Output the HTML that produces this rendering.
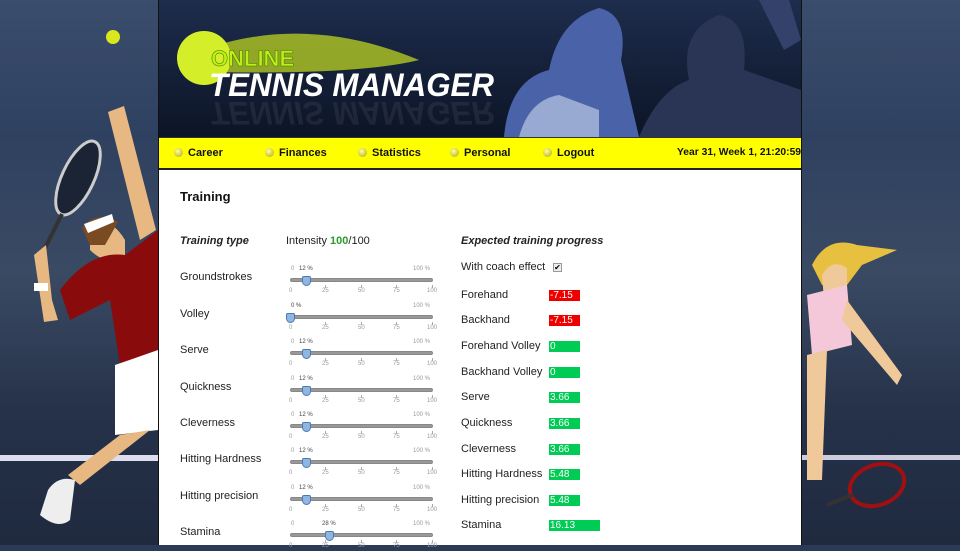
<!DOCTYPE html>
<html><head><meta charset="utf-8"><style>
*{margin:0;padding:0;box-sizing:border-box}
body{width:960px;height:545px;overflow:hidden;position:relative;font-family:"Liberation Sans",Arial,sans-serif;background:#2b3a55}
.side{position:absolute;top:0;height:545px;width:158px;background:linear-gradient(180deg,#3b4d6c 0%,#2f4160 25%,#3a4a63 50%,#26324a 75%,#1f2a3f 100%)}
#main{position:absolute;left:158px;top:0;width:644px;height:545px;background:#fff;border-left:1px solid #111;border-right:1px solid #111}
#hdr{position:absolute;left:0;top:0;width:642px;height:137px;background:linear-gradient(180deg,#1e2d4d,#0c1426)}
#nav{position:absolute;left:0;top:137px;width:642px;height:33px;background:#ffff00;border-top:1px solid #333;border-bottom:2px solid #222;font-size:11px;font-weight:bold;color:#111}
#nav span{position:absolute;top:9px;white-space:nowrap}
#nav i{display:inline-block;width:9px;height:9px;border-radius:50%;background:radial-gradient(circle at 40% 35%,#ffffa0,#b0a800);margin-right:5px;vertical-align:-1px}
.a{position:absolute;font-size:11px;color:#222;white-space:nowrap}
.s{position:absolute;font-size:6px;color:#999;white-space:nowrap;line-height:7px}
.tr{position:absolute;left:290px;width:143px;height:4px;background:#999;border-radius:2px;border:1px solid #888}
.th{position:absolute;width:9px;height:10px;background:#8fb6e0;border:1px solid #4a7ab0;border-radius:2px 2px 5px 5px}
.tk{position:absolute;width:1px;height:3px;background:#aaa}
.v{position:absolute;left:549px;height:11px;font-size:10px;color:#fff;padding-left:1px;line-height:11px}
.r{background:#ee0000}.g{background:#00cc55}
.row{position:absolute;left:0;width:960px;height:30px}
</style></head><body>
<div class="side" style="left:0"></div>
<div class="side" style="left:802px"></div>
<svg style="position:absolute;left:0;top:0" width="160" height="545">
<rect x="0" y="455" width="158" height="6" fill="#dde"/>
<circle cx="113" cy="37" r="7" fill="#d8e81c"/>
<ellipse cx="78" cy="178" rx="16" ry="40" transform="rotate(25 78 178)" fill="#1b2435" stroke="#ccc" stroke-width="3"/>
<line x1="62" y1="214" x2="44" y2="250" stroke="#333" stroke-width="4"/>
<path d="M108 112 L124 106 L156 230 L140 240Z" fill="#e8b883"/>
<path d="M90 225 Q110 215 125 240 L125 260 Q105 265 90 250Z" fill="#e8b883"/>
<path d="M82 228 Q95 210 118 222 L105 245 L90 245Z" fill="#7a4a22"/>
<path d="M84 224 L112 214 L114 222 L88 233Z" fill="#fff"/>
<path d="M60 290 Q90 250 125 255 L158 230 L158 350 L120 365 L110 300 L70 320Z" fill="#8a0b0b"/>
<path d="M34 255 L46 245 L52 300 L58 320 L44 322Z" fill="#e8b883"/>
<rect x="34" y="283" width="14" height="8" fill="#fff"/>
<path d="M115 365 L158 350 L158 430 L115 435Z" fill="#fff"/>
<path d="M120 435 L150 430 L80 485 L68 475Z" fill="#e8b883"/>
<path d="M48 490 Q58 475 75 480 L70 520 Q58 530 40 515Z" fill="#eee"/>
</svg>
<svg style="position:absolute;left:802px;top:0" width="158" height="545">
<rect x="0" y="455" width="158" height="5" fill="#ccd"/>
<path d="M10 265 Q25 235 55 245 L95 250 L60 265 L45 285 L20 285Z" fill="#e8c040"/>
<path d="M20 275 Q30 258 45 268 L45 300 L22 300Z" fill="#f0c99a"/>
<path d="M5 295 L45 285 L50 345 L10 355Z" fill="#f4c8d8"/>
<path d="M45 300 L100 375 L95 385 L40 320Z" fill="#f0c99a"/>
<path d="M5 355 L25 350 L20 480 L5 480Z" fill="#f0c99a"/>
<ellipse cx="75" cy="485" rx="28" ry="20" transform="rotate(-20 75 485)" fill="none" stroke="#a01010" stroke-width="4"/>
<line x1="50" y1="495" x2="25" y2="505" stroke="#333" stroke-width="4"/>
</svg>
<div id="main">
<div id="hdr">
<svg width="642" height="137">
<path d="M30 55 Q140 10 260 60 Q200 75 50 72Z" fill="#c8e020" opacity=".7"/>
<circle cx="45" cy="58" r="27" fill="#d4ee2a"/>
<text x="52" y="66" font-family="Liberation Sans" font-weight="bold" font-size="22" fill="#b8f018" stroke="#4a7000" stroke-width=".5">ONLINE</text>
<text x="50" y="96" font-family="Liberation Sans" font-weight="bold" font-style="italic" font-size="32" fill="#fff" textLength="285" lengthAdjust="spacingAndGlyphs">TENNIS MANAGER</text>
<g transform="translate(0,198) scale(1,-1)"><text x="50" y="96" font-family="Liberation Sans" font-weight="bold" font-style="italic" font-size="32" fill="#556" opacity=".25" textLength="285" lengthAdjust="spacingAndGlyphs">TENNIS MANAGER</text></g>
<path d="M345 137 Q350 80 390 70 Q400 20 440 8 Q470 15 462 60 L480 137Z" fill="#4a62a8"/>
<path d="M360 137 Q370 100 400 95 L440 110 L440 137Z" fill="#cdd8ef" opacity=".6"/>
<path d="M480 137 Q500 90 530 80 Q520 30 560 15 Q590 20 585 70 L642 90 L642 137Z" fill="#2a3556"/>
<path d="M600 0 L630 0 L642 40 L625 50Z" fill="#34416b"/>
</svg>
</div>
<div id="nav">
<span style="left:15px"><i></i>Career</span>
<span style="left:106px"><i></i>Finances</span>
<span style="left:199px"><i></i>Statistics</span>
<span style="left:291px"><i></i>Personal</span>
<span style="left:384px"><i></i>Logout</span>
<span style="left:518px;font-size:10.3px">Year 31, Week 1, 21:20:59</span>
</div>
</div>
<div class="a" style="left:180px;top:189px;font-size:13px;font-weight:bold;color:#111">Training</div>
<div class="a" style="left:180px;top:235px;font-weight:bold;font-style:italic">Training type</div>
<div class="a" style="left:286px;top:235px">Intensity <b style="color:#2a9a2a">100</b>/100</div>
<div class="a" style="left:461px;top:235px;font-weight:bold;font-style:italic">Expected training progress</div>
<div class="a" style="left:461px;top:261px">With coach effect</div>
<div style="position:absolute;left:553px;top:263px;width:9px;height:9px;border:1px solid #999;background:#eee;font-size:8px;line-height:8px;text-align:center">✔</div>

<div class="a" style="left:180px;top:271px">Groundstrokes</div>
<div class="a" style="left:180px;top:308px">Volley</div>
<div class="a" style="left:180px;top:344px">Serve</div>
<div class="a" style="left:180px;top:381px">Quickness</div>
<div class="a" style="left:180px;top:417px">Cleverness</div>
<div class="a" style="left:180px;top:453px">Hitting Hardness</div>
<div class="a" style="left:180px;top:490px">Hitting precision</div>
<div class="a" style="left:180px;top:526px">Stamina</div>

<div class="row" style="top:266px">
<div class="s" style="left:291px;top:0">0</div><div class="s" style="left:299px;top:0;color:#444">12 %</div><div class="s" style="left:413px;top:0">100 %</div>
<div class="tr" style="top:12px"></div><div class="th" style="left:302px;top:10px"></div>
<div class="tk" style="left:325px;top:19px"></div><div class="tk" style="left:361px;top:19px"></div><div class="tk" style="left:396px;top:19px"></div><div class="tk" style="left:432px;top:19px"></div>
<div class="s" style="left:289px;top:22px">0</div><div class="s" style="left:322px;top:22px">25</div><div class="s" style="left:358px;top:22px">50</div><div class="s" style="left:393px;top:22px">75</div><div class="s" style="left:427px;top:22px">100</div>
</div>
<div class="row" style="top:303px">
<div class="s" style="left:291px;top:0;color:#444">0 %</div><div class="s" style="left:413px;top:0">100 %</div>
<div class="tr" style="top:12px"></div><div class="th" style="left:286px;top:10px"></div>
<div class="tk" style="left:325px;top:19px"></div><div class="tk" style="left:361px;top:19px"></div><div class="tk" style="left:396px;top:19px"></div><div class="tk" style="left:432px;top:19px"></div>
<div class="s" style="left:289px;top:22px">0</div><div class="s" style="left:322px;top:22px">25</div><div class="s" style="left:358px;top:22px">50</div><div class="s" style="left:393px;top:22px">75</div><div class="s" style="left:427px;top:22px">100</div>
</div>
<div class="row" style="top:339px">
<div class="s" style="left:291px;top:0">0</div><div class="s" style="left:299px;top:0;color:#444">12 %</div><div class="s" style="left:413px;top:0">100 %</div>
<div class="tr" style="top:12px"></div><div class="th" style="left:302px;top:10px"></div>
<div class="tk" style="left:325px;top:19px"></div><div class="tk" style="left:361px;top:19px"></div><div class="tk" style="left:396px;top:19px"></div><div class="tk" style="left:432px;top:19px"></div>
<div class="s" style="left:289px;top:22px">0</div><div class="s" style="left:322px;top:22px">25</div><div class="s" style="left:358px;top:22px">50</div><div class="s" style="left:393px;top:22px">75</div><div class="s" style="left:427px;top:22px">100</div>
</div>
<div class="row" style="top:376px">
<div class="s" style="left:291px;top:0">0</div><div class="s" style="left:299px;top:0;color:#444">12 %</div><div class="s" style="left:413px;top:0">100 %</div>
<div class="tr" style="top:12px"></div><div class="th" style="left:302px;top:10px"></div>
<div class="tk" style="left:325px;top:19px"></div><div class="tk" style="left:361px;top:19px"></div><div class="tk" style="left:396px;top:19px"></div><div class="tk" style="left:432px;top:19px"></div>
<div class="s" style="left:289px;top:22px">0</div><div class="s" style="left:322px;top:22px">25</div><div class="s" style="left:358px;top:22px">50</div><div class="s" style="left:393px;top:22px">75</div><div class="s" style="left:427px;top:22px">100</div>
</div>
<div class="row" style="top:412px">
<div class="s" style="left:291px;top:0">0</div><div class="s" style="left:299px;top:0;color:#444">12 %</div><div class="s" style="left:413px;top:0">100 %</div>
<div class="tr" style="top:12px"></div><div class="th" style="left:302px;top:10px"></div>
<div class="tk" style="left:325px;top:19px"></div><div class="tk" style="left:361px;top:19px"></div><div class="tk" style="left:396px;top:19px"></div><div class="tk" style="left:432px;top:19px"></div>
<div class="s" style="left:289px;top:22px">0</div><div class="s" style="left:322px;top:22px">25</div><div class="s" style="left:358px;top:22px">50</div><div class="s" style="left:393px;top:22px">75</div><div class="s" style="left:427px;top:22px">100</div>
</div>
<div class="row" style="top:448px">
<div class="s" style="left:291px;top:0">0</div><div class="s" style="left:299px;top:0;color:#444">12 %</div><div class="s" style="left:413px;top:0">100 %</div>
<div class="tr" style="top:12px"></div><div class="th" style="left:302px;top:10px"></div>
<div class="tk" style="left:325px;top:19px"></div><div class="tk" style="left:361px;top:19px"></div><div class="tk" style="left:396px;top:19px"></div><div class="tk" style="left:432px;top:19px"></div>
<div class="s" style="left:289px;top:22px">0</div><div class="s" style="left:322px;top:22px">25</div><div class="s" style="left:358px;top:22px">50</div><div class="s" style="left:393px;top:22px">75</div><div class="s" style="left:427px;top:22px">100</div>
</div>
<div class="row" style="top:485px">
<div class="s" style="left:291px;top:0">0</div><div class="s" style="left:299px;top:0;color:#444">12 %</div><div class="s" style="left:413px;top:0">100 %</div>
<div class="tr" style="top:12px"></div><div class="th" style="left:302px;top:10px"></div>
<div class="tk" style="left:325px;top:19px"></div><div class="tk" style="left:361px;top:19px"></div><div class="tk" style="left:396px;top:19px"></div><div class="tk" style="left:432px;top:19px"></div>
<div class="s" style="left:289px;top:22px">0</div><div class="s" style="left:322px;top:22px">25</div><div class="s" style="left:358px;top:22px">50</div><div class="s" style="left:393px;top:22px">75</div><div class="s" style="left:427px;top:22px">100</div>
</div>
<div class="row" style="top:521px">
<div class="s" style="left:291px;top:0">0</div><div class="s" style="left:322px;top:0;color:#444">28 %</div><div class="s" style="left:413px;top:0">100 %</div>
<div class="tr" style="top:12px"></div><div class="th" style="left:325px;top:10px"></div>
<div class="tk" style="left:325px;top:19px"></div><div class="tk" style="left:361px;top:19px"></div><div class="tk" style="left:396px;top:19px"></div><div class="tk" style="left:432px;top:19px"></div>
<div class="s" style="left:289px;top:22px">0</div><div class="s" style="left:322px;top:22px">25</div><div class="s" style="left:358px;top:22px">50</div><div class="s" style="left:393px;top:22px">75</div><div class="s" style="left:427px;top:22px">100</div>
</div>

<div class="a" style="left:461px;top:289px">Forehand</div><div class="v r" style="top:290px;width:31px">-7.15</div>
<div class="a" style="left:461px;top:314px">Backhand</div><div class="v r" style="top:315px;width:31px">-7.15</div>
<div class="a" style="left:461px;top:340px">Forehand Volley</div><div class="v g" style="top:341px;width:31px">0</div>
<div class="a" style="left:461px;top:366px">Backhand Volley</div><div class="v g" style="top:367px;width:31px">0</div>
<div class="a" style="left:461px;top:391px">Serve</div><div class="v g" style="top:392px;width:31px">3.66</div>
<div class="a" style="left:461px;top:417px">Quickness</div><div class="v g" style="top:418px;width:31px">3.66</div>
<div class="a" style="left:461px;top:443px">Cleverness</div><div class="v g" style="top:444px;width:31px">3.66</div>
<div class="a" style="left:461px;top:468px">Hitting Hardness</div><div class="v g" style="top:469px;width:31px">5.48</div>
<div class="a" style="left:461px;top:494px">Hitting precision</div><div class="v g" style="top:495px;width:31px">5.48</div>
<div class="a" style="left:461px;top:519px">Stamina</div><div class="v g" style="top:520px;width:51px">16.13</div>
</body></html>
